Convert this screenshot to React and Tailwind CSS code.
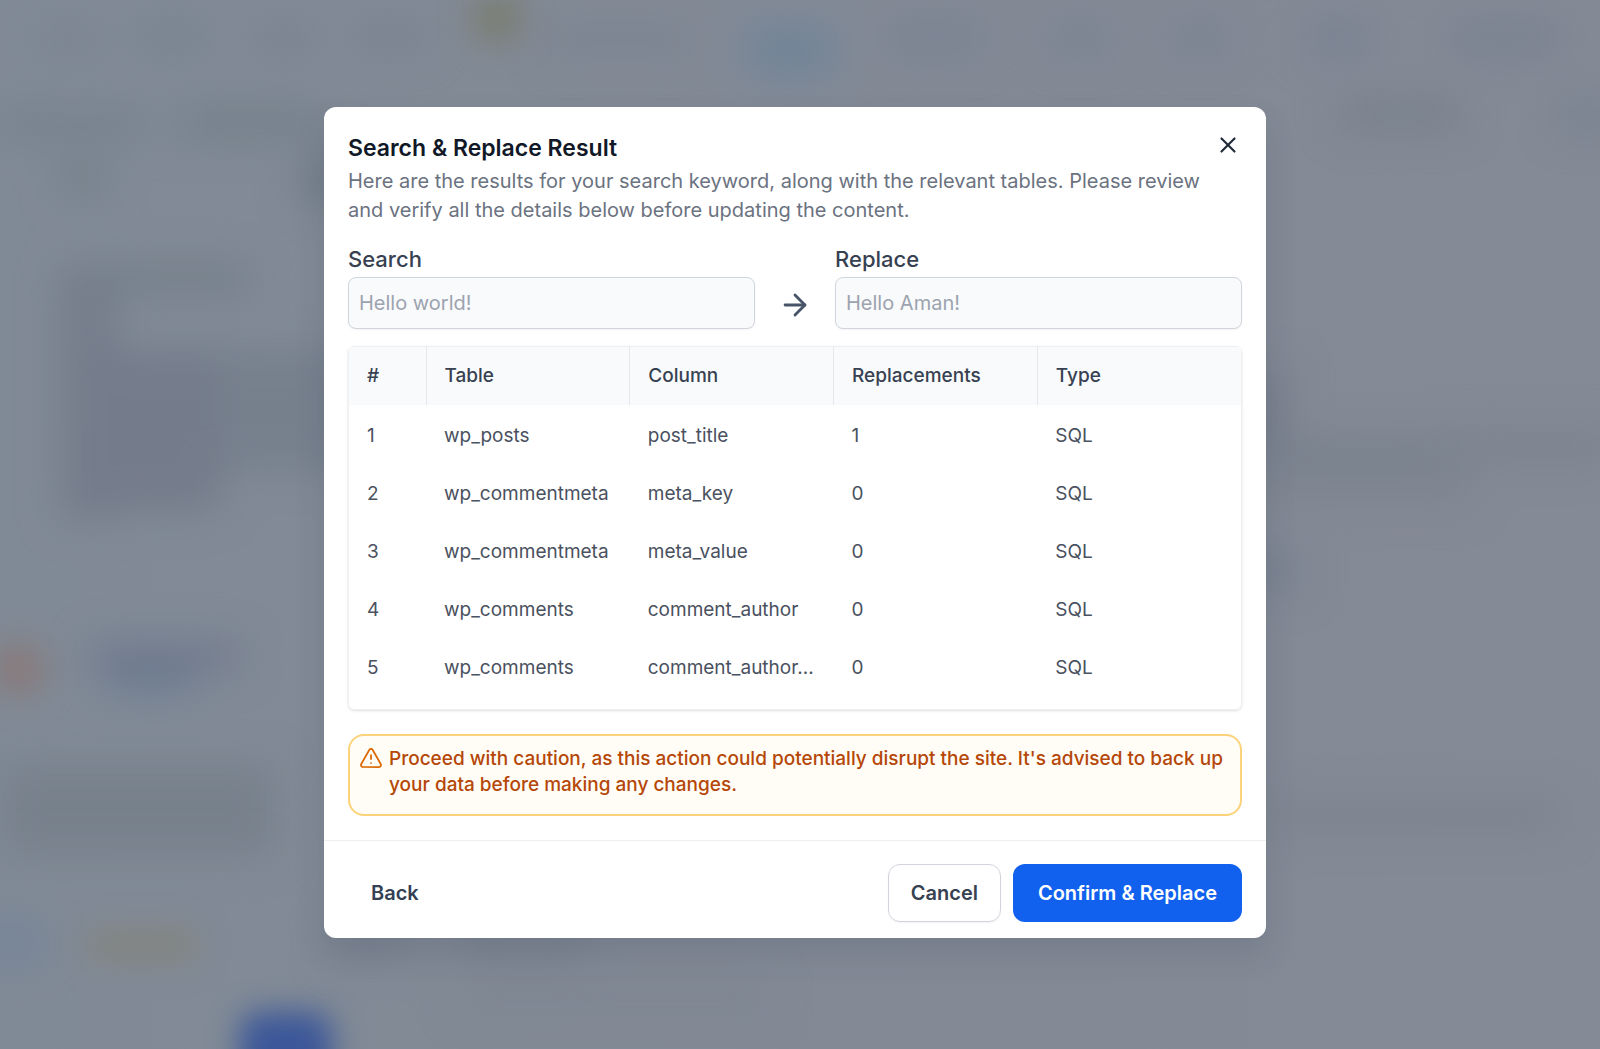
import { ArrowRight, X, TriangleAlert } from "lucide-react";

const rows = [
  ["1", "wp_posts", "post_title", "1", "SQL"],
  ["2", "wp_commentmeta", "meta_key", "0", "SQL"],
  ["3", "wp_commentmeta", "meta_value", "0", "SQL"],
  ["4", "wp_comments", "comment_author", "0", "SQL"],
  ["5", "wp_comments", "comment_author...", "0", "SQL"],
];

const headings = ["#", "Table", "Column", "Replacements", "Type"];

/* Soft, out-of-focus shapes of the page that lies behind the dialog. */
function Backdrop() {
  return (
    <svg
      aria-hidden="true"
      viewBox="0 0 1600 1049"
      preserveAspectRatio="xMidYMid slice"
      className="absolute inset-0 h-full w-full bg-[#828a96]"
    >
      <defs>
        <filter id="soft" x="-50%" y="-100%" width="200%" height="300%" colorInterpolationFilters="sRGB">
          <feGaussianBlur stdDeviation="19" />
        </filter>
        <filter id="glow" x="-50%" y="-100%" width="200%" height="300%" colorInterpolationFilters="sRGB">
          <feGaussianBlur stdDeviation="15" />
        </filter>
        <linearGradient id="shade" x1="0" x2="1" y1="0" y2="0">
          <stop offset="0" stopColor="#808a96" />
          <stop offset="0.3" stopColor="#828a96" />
          <stop offset="1" stopColor="#848a96" />
        </linearGradient>
      </defs>
      <rect width="1600" height="1049" fill="url(#shade)" />
      <g filter="url(#soft)">
        <rect x="40" y="24" width="60" height="30" fill="#7b8491" />
        <rect x="140" y="20" width="65" height="32" fill="#798391" />
        <rect x="255" y="24" width="60" height="30" fill="#7a8390" />
        <rect x="355" y="20" width="70" height="32" fill="#7a8390" />
        <rect x="545" y="24" width="150" height="30" fill="#7c8491" />
        <rect x="890" y="20" width="90" height="36" fill="#7a8291" />
        <rect x="1050" y="24" width="60" height="30" fill="#7a8291" />
        <rect x="1170" y="24" width="60" height="30" fill="#7a8291" />
        <rect x="1310" y="20" width="60" height="36" fill="#798191" />
        <rect x="1450" y="20" width="110" height="36" fill="#7a8290" />
        <rect x="0" y="110" width="145" height="28" fill="#76818d" />
        <rect x="180" y="108" width="145" height="30" fill="#74808b" />
        <rect x="1340" y="100" width="120" height="28" fill="#77808c" />
        <rect x="1560" y="100" width="50" height="30" fill="#75828f" />
        <rect x="60" y="160" width="45" height="34" fill="#75808b" />
        <rect x="300" y="160" width="50" height="40" fill="#707c88" />
        <rect x="60" y="266" width="190" height="26" fill="#737e89" />
        <rect x="60" y="270" width="56" height="250" fill="#757d8b" />
        <rect x="90" y="350" width="210" height="90" fill="#747c8b" />
        <rect x="80" y="430" width="140" height="80" fill="#747b8a" />
        <rect x="220" y="350" width="140" height="120" fill="#76808d" />
        <rect x="1230" y="370" width="60" height="70" fill="#79808d" />
        <rect x="1250" y="440" width="220" height="32" fill="#78818d" />
        <rect x="1440" y="430" width="180" height="32" fill="#7c8490" />
        <rect x="1250" y="480" width="220" height="24" fill="#7d8590" />
        <rect x="1240" y="550" width="60" height="40" fill="#78818f" />
        <rect x="90" y="642" width="150" height="28" fill="#727a8d" />
        <rect x="105" y="664" width="90" height="26" fill="#6b7a91" />
        <rect x="0" y="765" width="275" height="90" fill="#77818c" />
        <rect x="1260" y="802" width="300" height="26" fill="#7b838f" />
        <rect x="-20" y="926" width="60" height="34" fill="#74839b" />
        <rect x="460" y="925" width="130" height="34" fill="#7a838f" />
        <rect x="460" y="985" width="310" height="24" fill="#7d8591" />
        <rect x="330" y="930" width="80" height="28" fill="#7a8391" />
        <rect x="745" y="24" width="90" height="52" fill="#728498" />
      </g>
      <g filter="url(#glow)">
        <circle cx="497" cy="18" r="28" fill="#7b7f76" />
        <circle cx="18" cy="669" r="28" fill="#877b7c" />
        <rect x="90" y="930" width="105" height="30" fill="#83847e" />
        <rect x="240" y="1012" width="92" height="90" rx="20" fill="#3b5799" />
      </g>
    </svg>
  );
}

function Field({ id, label, value }) {
  return (
    <div className="min-w-0 flex-1">
      <label htmlFor={id} className="block text-[22px] leading-8 font-medium text-[#374151]">
        {label}
      </label>
      <input
        id={id}
        type="text"
        placeholder={value}
        readOnly
        className="mt-0.5 block h-[52px] w-full rounded-lg border border-[#d1d5db] bg-[#f9fafb] px-2.5 text-xl text-[#9ca3af] shadow-xs outline-none placeholder:text-[#9ca3af]"
      />
    </div>
  );
}

export default function App() {
  return (
    <div className="relative flex min-h-screen items-center justify-center pr-2.5 pb-1 font-[Inter,sans-serif]">
      <Backdrop />
      <section
        role="dialog"
        aria-modal="true"
        aria-labelledby="dialog-title"
        className="relative w-full max-w-[942px] rounded-xl bg-white shadow-[0_16px_32px_rgba(40,50,70,0.14)]"
      >
        <div className="p-6">
          <header className="flex items-start justify-between">
            <div>
              <h1 id="dialog-title" className="text-[23px] leading-[34px] font-semibold text-[#111827]">
                Search &amp; Replace Result
              </h1>
              <p className="mt-0.5 text-xl leading-[29px] text-[#6b7280]">
                Here are the results for your search keyword, along with the relevant tables. Please review and verify all
                the details below before updating the content.
              </p>
            </div>
            <button type="button" aria-label="Close" className="-ml-6 p-px text-[#1f2937]">
              <X size={26} strokeWidth={2} />
            </button>
          </header>

          <div className="mt-[18px] flex items-end">
            <Field id="search" label="Search" value="Hello world!" />
            <div className="flex h-12 w-20 items-center justify-center text-[#475467]">
              <ArrowRight size={34} strokeWidth={2} />
            </div>
            <Field id="replace" label="Replace" value="Hello Aman!" />
          </div>

          <div className="mt-[17px] rounded-md border border-[#eeeff1] pb-3.5 shadow-sm">
            <table className="w-full table-fixed text-left text-[19px] leading-7 text-[#4a5160]">
              <thead className="bg-[#f9fafb] text-[#374151]">
                <tr className="h-[58px]">
                  {headings.map((heading, index) => (
                    <th
                      key={heading}
                      scope="col"
                      className={
                        index === 0
                          ? "w-[77px] border-r border-[#e5e7eb] px-[18px] font-medium"
                          : index < headings.length - 1
                            ? "border-r border-[#e5e7eb] px-[18px] font-medium"
                            : "px-[18px] font-medium"
                      }
                    >
                      {heading}
                    </th>
                  ))}
                </tr>
              </thead>
              <tbody>
                {rows.map((row) => (
                  <tr key={row[0]} className="h-[58px]">
                    {row.map((cell, index) => (
                      <td key={headings[index]} className="pt-1 pl-[18px] whitespace-nowrap">
                        {cell}
                      </td>
                    ))}
                  </tr>
                ))}
              </tbody>
            </table>
          </div>

          <div className="mt-6 flex items-start gap-1.5 rounded-2xl border-2 border-[#fcd27a] bg-[#fffdf5] px-2.5 pt-2.5 pb-4 text-[#b54708]">
            <TriangleAlert size={24} strokeWidth={1.75} className="-ml-px shrink-0 text-[#dc6803]" />
            <p className="text-[19px] leading-[26px] font-medium">
              Proceed with caution, as this action could potentially disrupt the site. It's advised to back up your data
              before making any changes.
            </p>
          </div>
        </div>

        <footer className="flex items-center gap-3 border-t border-[#eceef0] px-6 pt-[23px] pb-4 text-xl leading-7 font-semibold">
          <button type="button" className="mr-auto px-[23px] py-[15px] text-[#344054]">
            Back
          </button>
          <button type="button" className="rounded-xl border border-[#d1d5db] px-[22px] py-3.5 text-[#374151] shadow-xs">
            Cancel
          </button>
          <button type="button" className="rounded-xl bg-[#1161ee] px-[25px] py-[15px] text-white">
            Confirm &amp; Replace
          </button>
        </footer>
      </section>
    </div>
  );
}
